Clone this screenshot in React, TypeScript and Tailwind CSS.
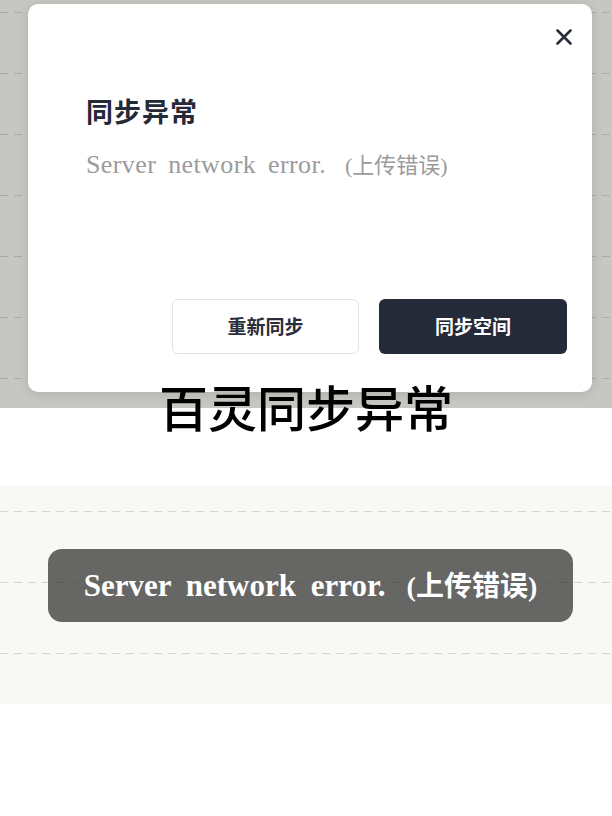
import React from "react";

const serif = { fontFamily: '"Liberation Serif", "Noto Sans CJK SC", serif' };
const cjk = { fontFamily: '"Noto Sans CJK SC", sans-serif' };

function DashLine({ color }: { color: "dark" | "light" }) {
  return (
    <div
      className={
        color === "dark"
          ? "h-px w-full bg-[linear-gradient(to_right,#a9a9a6_8px,transparent_8px)] bg-[length:14px_1px]"
          : "h-px w-full bg-[linear-gradient(to_right,#d6d6d2_8px,transparent_8px)] bg-[length:14px_1px]"
      }
    />
  );
}

function CloseIcon() {
  return (
    <svg width="18" height="18" viewBox="0 0 18 18" fill="none">
      <path d="M2.5 2.5 L15.5 15.5 M15.5 2.5 L2.5 15.5" stroke="#2a2d3a" strokeWidth="2.6" strokeLinecap="round" />
    </svg>
  );
}

export default function App() {
  return (
    <div className="w-[612px] min-h-[816px] bg-white overflow-hidden">
      {/* Top: dialog over gray notebook background */}
      <div className="relative h-[408px] bg-[#c6c6c3]">
        <div className="absolute inset-0 flex flex-col gap-[60px] pt-[12px]">
          <DashLine color="dark" />
          <DashLine color="dark" />
          <DashLine color="dark" />
          <DashLine color="dark" />
          <DashLine color="dark" />
          <DashLine color="dark" />
          <DashLine color="dark" />
        </div>
        <div className="relative pl-[28px] pr-[20px] pt-[4px]">
          <div className="relative flex h-[388px] flex-col rounded-[10px] bg-white pl-[58px] pr-[25px] pb-[38px] shadow-[0_2px_12px_rgba(0,0,0,0.12)]">
            <button className="absolute right-[19px] top-[24px] flex items-center justify-center">
              <CloseIcon />
            </button>
            <h2 className="mt-[90px] text-[27px] font-bold leading-[34px] tracking-[1px] text-[#262936]" style={cjk}>
              同步异常
            </h2>
            <p className="mt-[22px] whitespace-nowrap leading-[30px] text-[#9b9b9b]" style={serif}>
              <span className="text-[26px] tracking-[0.4px] [word-spacing:5px]">Server network error.</span>
              <span className="ml-[19px] text-[22px]">(上传错误)</span>
            </p>
            <div className="mt-auto flex justify-end gap-[20px]">
              <button
                className="flex h-[55px] w-[187px] items-center justify-center rounded-[6px] border border-[#e3e3e3] bg-white text-[19px] font-bold text-[#2a2d38]"
                style={cjk}
              >
                重新同步
              </button>
              <button
                className="flex h-[55px] w-[188px] items-center justify-center rounded-[6px] bg-[#252a38] text-[19px] font-bold text-white"
                style={cjk}
              >
                同步空间
              </button>
            </div>
          </div>
        </div>
      </div>

      {/* Big caption */}
      <div className="relative z-10 -mt-[26px] text-center text-[49px] font-medium leading-[48px] text-black" style={cjk}>
        百灵同步异常
      </div>

      {/* Bottom: toast over cream notebook */}
      <div className="relative mt-[56px] h-[218px] bg-[#f8f8f4]">
        <div className="absolute inset-0 flex flex-col gap-[70px] pt-[25px]">
          <DashLine color="light" />
          <DashLine color="light" />
          <DashLine color="light" />
        </div>
        <div className="relative pl-[48px] pr-[39px] pt-[63px]">
          <div className="flex h-[73px] items-center justify-center rounded-[14px] bg-[rgba(40,40,38,0.7)]">
            <span className="whitespace-nowrap font-bold leading-none text-white" style={serif}>
              <span className="text-[31px] [word-spacing:7px]">Server network error.</span>
              <span className="ml-[21px] text-[28px]">(上传错误)</span>
            </span>
          </div>
        </div>
      </div>
    </div>
  );
}
